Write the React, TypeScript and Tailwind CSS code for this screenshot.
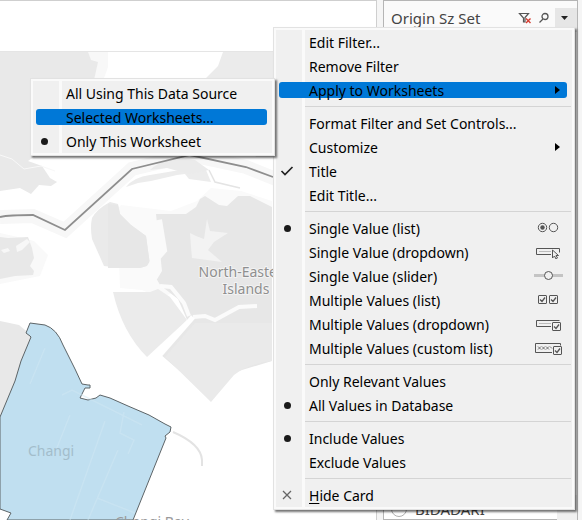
import React from "react";

type Mark = "dot" | "check" | "close";
type Row = {
  label: React.ReactNode;
  mark?: Mark;
  active?: boolean;
  submenu?: boolean;
  icon?: React.ReactNode;
};

function Marker({ kind }: { kind: Mark }) {
  if (kind === "dot") return <span className="size-[7px] rounded-full bg-[#1a1a1a]" />;
  if (kind === "check")
    return (
      <svg width="14" height="12" viewBox="0 0 14 12" fill="none" stroke="#222" strokeWidth="1.7">
        <path d="M1.5 6 5 9.5 12.5 2" />
      </svg>
    );
  return (
    <svg width="10" height="10" viewBox="0 0 10 10" fill="none" stroke="#666" strokeWidth="1.3">
      <path d="M1 1 9 9M9 1 1 9" />
    </svg>
  );
}

const box = { fill: "none", stroke: "#555", strokeWidth: 1 };

const RadioPair = () => (
  <svg width="30" height="14" viewBox="0 0 30 14" {...box}>
    <circle cx="8.5" cy="6.5" r="4.2" />
    <circle cx="8.5" cy="6.5" r="2.2" fill="#555" stroke="none" />
    <circle cx="19.5" cy="6.5" r="4.2" />
  </svg>
);
const DropCursor = () => (
  <svg width="30" height="14" viewBox="0 0 30 14" {...box}>
    <path d="M17 9.5H2.5v-6h23v4" />
    <path d="M5 6.5h12" stroke="#bbb" />
    <path d="M18.5 5v8l2-2 1.5 3 1.5-1-1.5-2.5h2.5z" fill="#f0f0f0" />
  </svg>
);
const SliderIcon = () => (
  <svg width="30" height="14" viewBox="0 0 30 14" fill="none">
    <path d="M0 6.5h29" stroke="#c4c4c4" strokeWidth="3" />
    <circle cx="14.5" cy="6.5" r="4" fill="#f0f0f0" stroke="#555" />
  </svg>
);
const CheckPair = () => (
  <svg width="30" height="14" viewBox="0 0 30 14" {...box}>
    <rect x="4.5" y="2.5" width="8" height="8" rx=".5" />
    <rect x="15.5" y="2.5" width="8" height="8" rx=".5" />
    <path d="M6 6.5l2 2 3-4M17 6.5l2 2 3-4" strokeWidth="1.3" />
  </svg>
);
const DropCheck = () => (
  <svg width="30" height="14" viewBox="0 0 30 14" {...box}>
    <path d="M17 9.5H2.5v-6h23" />
    <path d="M5 6.5h12" stroke="#bbb" />
    <rect x="18.5" y="5.5" width="8" height="8" rx=".5" />
    <path d="M20 9.5l2 2 3-4" strokeWidth="1.3" />
  </svg>
);
const CustomCheck = () => (
  <svg width="30" height="14" viewBox="0 0 30 14" {...box}>
    <path d="M18 11.5H1.5v-9h25v2" />
    <path
      d="M4 5.5l3 3m0-3l-3 3M8 5.5l3 3m0-3l-3 3M12 5.5l3 3m0-3l-3 3M16 5.5l2 2"
      strokeWidth=".8"
    />
    <rect x="19.5" y="5.5" width="8" height="8" rx=".5" fill="#f0f0f0" />
    <path d="M21 9.5l2 2 3-4" strokeWidth="1.3" />
  </svg>
);

const groups: Row[][] = [
  [{ label: "Edit Filter..." }, { label: "Remove Filter" }, { label: "Apply to Worksheets", active: true, submenu: true }],
  [
    { label: "Format Filter and Set Controls..." },
    { label: "Customize", submenu: true },
    { label: "Title", mark: "check" },
    { label: "Edit Title..." },
  ],
  [
    { label: "Single Value (list)", mark: "dot", icon: <RadioPair /> },
    { label: "Single Value (dropdown)", icon: <DropCursor /> },
    { label: "Single Value (slider)", icon: <SliderIcon /> },
    { label: "Multiple Values (list)", icon: <CheckPair /> },
    { label: "Multiple Values (dropdown)", icon: <DropCheck /> },
    { label: "Multiple Values (custom list)", icon: <CustomCheck /> },
  ],
  [{ label: "Only Relevant Values" }, { label: "All Values in Database", mark: "dot" }],
  [{ label: "Include Values", mark: "dot" }, { label: "Exclude Values" }],
  [{ label: <><span className="underline underline-offset-2">H</span>ide Card</>, mark: "close" }],
];

const applyGroups: Row[][] = [
  [
    { label: "All Using This Data Source" },
    { label: "Selected Worksheets...", active: true },
    { label: "Only This Worksheet", mark: "dot" },
  ],
];

function Menu({ rows, label, className }: { rows: Row[][]; label: string; className: string }) {
  return (
    <div
      role="menu"
      aria-label={label}
      className={`absolute border border-[#e2e2e2] bg-[#f0f0f0] shadow-[2px_2px_2px_rgba(0,0,0,0.55)] ${className}`}
    >
      <div className="border-2 border-[#fafafa] bg-[linear-gradient(to_right,transparent_26px,#fafafa_26px,#fafafa_29px,transparent_29px)]">
        {rows.map((group, g) => (
          <React.Fragment key={g}>
            {g > 0 && <div role="separator" className="my-1 mr-px ml-[29px] h-px bg-[#d4d4d4]" />}
            {group.map((row, i) => (
              <button
                key={i}
                role="menuitem"
                className="flex h-6 w-full items-center pr-[5px] pl-[3px] text-left text-[14px] whitespace-nowrap text-black"
              >
                <span className={`flex h-4 w-full items-center rounded-[3px] ${row.active ? "bg-[#0078d7]" : ""}`}>
                  <span className="flex w-4 justify-center">{row.mark && <Marker kind={row.mark} />}</span>
                  <span className="ml-3.5 flex-1">{row.label}</span>
                  {row.icon && <span className="mr-[3px]">{row.icon}</span>}
                  {row.submenu && (
                    <svg className="mr-[7px]" width="5" height="8" viewBox="0 0 5 8">
                      <path d="M0 0 5 4 0 8z" fill="#000" />
                    </svg>
                  )}
                </span>
              </button>
            ))}
          </React.Fragment>
        ))}
      </div>
    </div>
  );
}

function MapView() {
  return (
    <svg className="block h-[468px] w-full" viewBox="0 52 376 468" preserveAspectRatio="xMinYMin slice" aria-label="Map">
      <rect y="52" width="376" height="468" fill="#fff" />
      <path d="M0 52h108v15l-8 22-60 65-40 6z" fill="#f8f8f8" />
      <path d="M0 52h88l3 8 7 2-4 18-40 60-16 14-10 7 14 5 8 12 7 4-6 4-12-1-8 9-11-6-20 3z" fill="#e9e9e9" />
      <path d="M0 155l12 4 12 10 17-3 14 5" fill="none" stroke="#f8f8f8" />
      <path d="M223 52h53v105h-20l-50-79 12-12z" fill="#ebebeb" />
      <path d="M0 217l33-1 32 14 67-61 58-14 56 12 35 14" fill="none" stroke="#f7f7f7" strokeWidth="14" />
      <path d="M126 187q8-10 24-12l30-5h26l5 12-22-3-4-5-8 1-26 6-13 2z" fill="#ececec" />
      <path d="M150 170q14-14 45-10l14 10-20 4-22-6z" fill="#ebebeb" />
      <path d="M209 170l6 12 25 6" fill="none" stroke="#e4e4e4" strokeWidth="1.5" />
      <path d="M117 210l4-5 50 6 26-10 14-13 30 3 31 10v90l-82-5-30 12-18-8-22-2z" fill="#fafafa" />
      <path d="M92 218q5-9 18-16l8 2 2 10 11 11 15 11 4 29-10 3-28-1-8-1-12-27q-2-12 0-21z" fill="#eaeaea" />
      <path d="M108 204l10 1 2 9 11 11 15 11 4 29-10 3h-32z" fill="#e7e7e7" />
      <path d="M156 214h30l10-7 4-8 5-3 14 9 8 1 11-10h12l22 11v154l-40 12-21 25-51-44 28-32-10-23-13-10-9-8 6-10z" fill="#e7e7e7" />
      <path d="M113 292h37l8-3 12 8 17 23-40 37q-25-25-34-65z" fill="#ebebeb" />
      <path d="M165 357l30-34h77v38q-22 2-38 14l-23 27z" fill="#eaeaea" />
      <path d="M160 286l11 1 13 16 5 13M193 317l12-1 10 4 24-13 18-1" fill="none" stroke="#fbfbfb" strokeWidth="4" />
      <path d="M193 317l-35 40" fill="none" stroke="#fff" strokeWidth="5" />
      <path d="M158 220l5 30-6 7-9 15 8 14" fill="none" stroke="#fafafa" strokeWidth="8" />
      <path d="M190 233l6 3 8 3 3-20 3 12 18 2-14 9-6 8 14 12-30-4-1-11z" fill="#f3f3f3" />
      <path d="M0 233l18 4 16 4 14 14-8 21-40 8z" fill="#f9f9f9" />
      <path d="M0 237l8 1 20-1 4 11 2 10-4 8 4 5-1 4-18 1-15 3z" fill="#e8e8e8" />
      <path d="M16 246l11-7 3 3-8 8-5 2zM1 250l7-2 2 3-6 2z" fill="#f7f7f7" />
      <path d="M0 321l19 4 12 10v110H0z" fill="#e8e8e8" />
      <path d="M0 217q9-2 33-2l32 15 67-61 58-14 56 12 27 10" fill="none" stroke="#8e8e8e" strokeWidth="1.8" />
      <path
        d="M0 417l15-36 6-20 10-24-1-1-4-3 4-10 15 2q12 4 18 20l12 24 7 15 6 1h2v3h-5l-5 10 8 2 8-2 4-3 10 3 18 8 21 9 16 9 6 3-1 5-5 4 1 2-33 82H7l4-7-11-4z"
        fill="#c0dff0"
        stroke="#5d6467"
      />
      <path
        d="M45 348l-15 36M62 395l10-5 40 20 30 15M70 415l-16 40M105 421L70 520M124 412l-4 21 14 7-6 14M118 450L88 520M97 498l38 15"
        fill="none"
        stroke="#d0e8f4"
        strokeWidth="1.5"
        opacity=".5"
      />
      <path d="M173 432q28 12 29 28v6" fill="none" stroke="#e3e3e3" strokeWidth="2" />
      <g fontFamily="'Noto Sans', sans-serif" fontSize="14">
        <g fill="#8f8f8f" stroke="#f3f3f3" strokeWidth="2" paintOrder="stroke" textAnchor="middle">
          <text x="245" y="277">North-Eastern</text>
          <text x="246" y="294">Islands</text>
        </g>
        <text x="28" y="456" fill="#a3bdcb">Changi</text>
        <text x="115" y="527" fill="#999">Changi Bay</text>
      </g>
    </svg>
  );
}

export default function App() {
  return (
    <div className="relative flex h-screen overflow-hidden bg-[#f5f5f5] font-['Noto_Sans',sans-serif]">
      <main className="min-w-0 flex-1 border-t border-r border-[#cfcfcf] bg-white">
        <div className="h-[51px] border-b border-[#e5e5e5]" />
        <MapView />
      </main>
      <aside className="mr-1 ml-1.5 flex w-[195px] flex-col border border-[#b5b5b5] bg-white text-[#444]">
        <header className="flex h-[31px] items-end bg-[#fafafa]">
          <h2 className="flex-1 pb-1 pl-[7px] text-[15px] leading-5 font-normal">Origin Sz Set</h2>
          <button aria-label="Clear filter" className="mb-2">
            <svg width="14" height="12" viewBox="0 0 14 12" fill="none" stroke="#555" strokeWidth="1.2">
              <path d="M5.5 10V6L1.5 1.5h9L7 5.5V10z" />
              <path d="M8 6.5l4.5 4.5M12.5 6.5L8 11" stroke="#d43c30" strokeWidth="1.4" />
            </svg>
          </button>
          <button aria-label="Search" className="mr-[5px] mb-2 ml-1.5">
            <svg width="12" height="12" viewBox="0 0 12 12" fill="none" stroke="#555" strokeWidth="1.3">
              <circle cx="7" cy="4.5" r="3" />
              <path d="M5 7L1.5 10.5" />
            </svg>
          </button>
          <button aria-label="Card menu" className="flex h-6 w-[22px] justify-center bg-[#e6e6e6] pt-2 pr-1">
            <svg width="7" height="4" viewBox="0 0 7 4">
              <path d="M0 0h7L3.5 4z" fill="#222" />
            </svg>
          </button>
        </header>
        <div className="mt-auto -mb-1 flex items-stretch">
          <label className="flex flex-1 items-center gap-2 pl-[7px] text-[15px] leading-7">
            <input type="radio" name="set" className="size-4 appearance-none rounded-full border border-[#b0b0b0]" />
            BIDADARI
          </label>
          <div className="w-5 bg-[#f0f0f0]" />
        </div>
      </aside>
      <Menu rows={groups} label="Card menu" className="top-[27px] right-[7px] w-[302px]" />
      <Menu rows={applyGroups} label="Apply to Worksheets" className="top-[78px] right-[307px] w-[245px]" />
    </div>
  );
}
